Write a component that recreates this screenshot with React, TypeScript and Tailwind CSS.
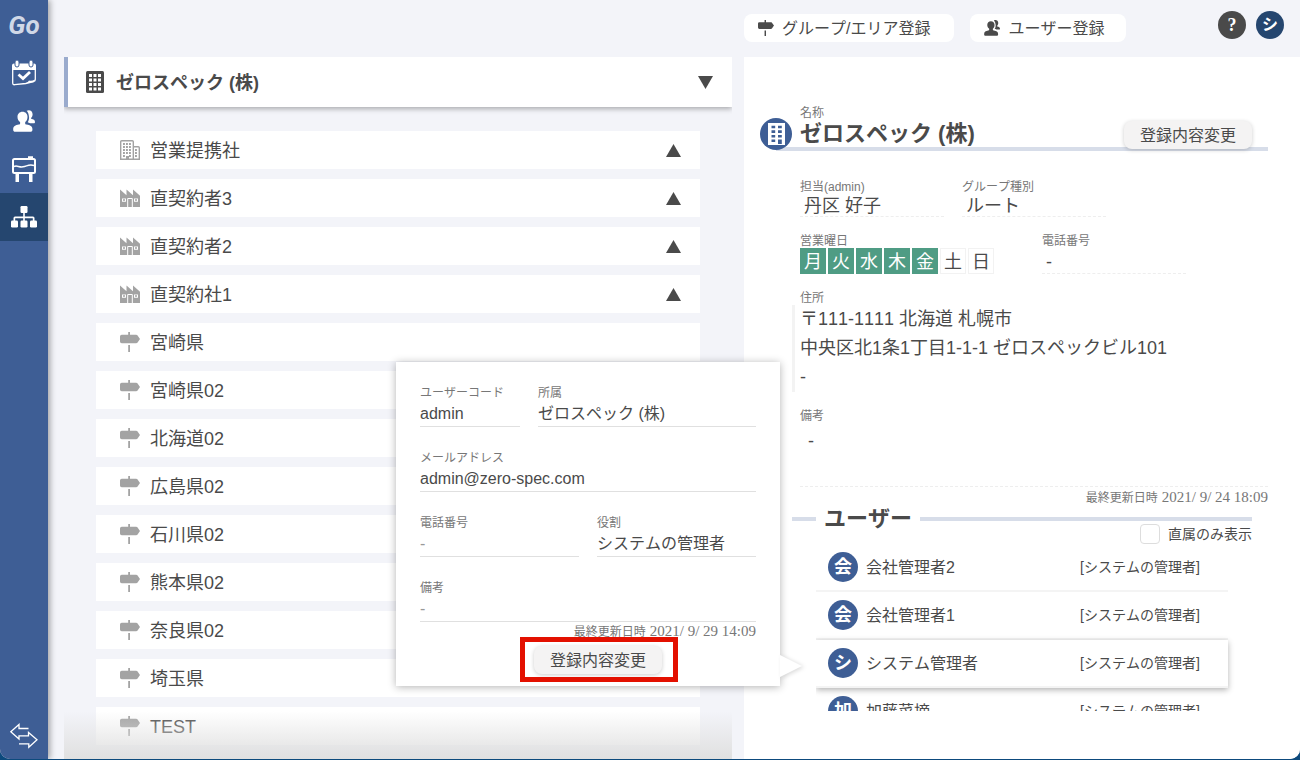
import React from 'react'

type IconProps = { className?: string }

const CalendarIcon = ({ className }: IconProps) => (
  <svg viewBox="0 0 26 28" className={className} fill="none" aria-hidden="true">
    <path d="M3 4.500h20a2 2 0 0 1 2 2V11H1V6.500a2 2 0 0 1 2-2z" fill="currentColor" />
    <path d="M1.700 10v14c0 1.300.8 1.900 2 1.700l11-1.200 8-2c1-.3 1.600-1 1.600-2V10" stroke="currentColor" strokeWidth="1.300" />
    <path d="M11 25c4-.5 5.500-1.200 7-3.500 2 .5 4 .2 6-1l-1 2.500z" fill="currentColor" />
    <rect x="4" y="1" width="4" height="7" rx="2" fill="currentColor" stroke="#3e5e95" strokeWidth="1" />
    <rect x="18" y="1" width="4" height="7" rx="2" fill="currentColor" stroke="#3e5e95" strokeWidth="1" />
    <path d="M7.500 15.500l4.500 4 7-6.500" stroke="currentColor" strokeWidth="2.800" />
  </svg>
)

const UsersIcon = ({ className }: IconProps) => (
  <svg viewBox="0 0 22 22" className={className} fill="currentColor" aria-hidden="true">
    <path d="M9.500 1.700c3 0 5 2.200 5 5.200 0 2.300-.9 4-2.300 5.200v1.300c0 .7.5 1 1.300 1.200 3.700.6 5.900 1.700 5.900 4.500v.8c0 1.200-.8 1.800-2 1.800H2.200c-1.200 0-2-.6-2-1.800v-.8c0-2.800 2.200-3.900 5.600-4.500.8-.2 1.300-.5 1.300-1.200v-1.300C5.600 11 4.500 9.200 4.500 6.900c0-3 2-5.200 5-5.200z" />
    <path d="M13.600.7c3-1.500 6 .3 6 3.500 0 1.700-.7 2.800-1.500 3.700v.9c2.500.5 3.900 1.400 3.900 3.100 0 .8-.4 1.300-1.200 1.300h-3.700c-.9-.5-1.600-.8-2.400-1 1-1.600 1.500-3.300 1.300-5.300-.2-2.200-.8-4.600-2.400-6.200z" />
  </svg>
)

const BoardIcon = ({ className }: IconProps) => (
  <svg viewBox="0 0 26 28" className={className} fill="none" aria-hidden="true">
    <rect x="2" y="4" width="22" height="14" rx="1.500" stroke="currentColor" strokeWidth="2" />
    <path d="M3 11.500c3-1.500 5 1 9 .3 4-.6 6-3 11-1.300" stroke="currentColor" strokeWidth="1.500" />
    <path d="M17 1.200h5V5h-5zM4.500 18H8v9H4.500zM18 18h3.500v9H18z" fill="currentColor" />
  </svg>
)

const SitemapIcon = ({ className }: IconProps) => (
  <svg viewBox="0 0 26 22" className={className} fill="currentColor" aria-hidden="true">
    <rect x="9.500" y="0" width="7" height="7" rx="1.200" />
    <path d="M12.200 6h1.600v4.500h8.200a1.500 1.500 0 0 1 1.500 1.500v3h-1.700v-2.800h-8V15h-1.600v-2.800h-8V15H2.500v-3A1.500 1.500 0 0 1 4 10.500h8.200z" />
    <rect x="0" y="14.500" width="7" height="7" rx="1.200" />
    <rect x="9.500" y="14.500" width="7" height="7" rx="1.200" />
    <rect x="19" y="14.500" width="7" height="7" rx="1.200" />
  </svg>
)

const SwapIcon = ({ className }: IconProps) => (
  <svg viewBox="0 0 30 28" className={className} fill="none" stroke="currentColor" strokeWidth="1.300" aria-hidden="true">
    <path d="M19.500 7.500H10V3.500L1.800 10.700 10 18v-3.200h9.500v-3.300L28 18.800l-8.200 7.400v-3.400H10" />
  </svg>
)

const HeadOfficeIcon = ({ className }: IconProps) => (
  <svg viewBox="0 0 18 22" className={className} aria-hidden="true">
    <rect x="0" y="0" width="18" height="22" rx="1.500" fill="currentColor" />
    {[3, 7.5, 12].map((x) =>
      [3, 7.5, 12, 16.5].map((y) => <rect key={`${x}-${y}`} x={x} y={y} width="3" height="3" fill="#fff" />),
    )}
  </svg>
)

const BuildingIcon = ({ className }: IconProps) => (
  <svg viewBox="0 0 17 22" className={className} aria-hidden="true">
    <path d="M0 0h17v22H0z" fill="#fff" />
    <path d="M3.500 2.700h3.700v2.600H3.500zM10 2.700h3.800v2.600H10zM3.500 7.300h3.700v2.600H3.500zM10 7.300h3.800v2.600H10zM3.500 11.900h3.700v2.600H3.500zM10 11.900h3.800v2.600H10zM3.500 16.500h3.700v2.600H3.500zM10 16.500h3.800V21H10z" fill="#3e5e95" />
  </svg>
)

const PartnerIcon = ({ className }: IconProps) => (
  <svg viewBox="0 0 20 20" className={className} aria-hidden="true">
    <path d="M.7 19.300V1.700a1 1 0 0 1 1-1h10.600a1 1 0 0 1 1 1v17.600zM13.300 6.700h5a1 1 0 0 1 1 1v11.600h-6z" fill="#fff" stroke="currentColor" strokeWidth="1.400" />
    <path d="M3 4h8.500M3 7h8.500M3 10h8.500M3 13h8.500M3 16h3M9 16h2.500M15 10h3M15 13h3M15 16h3" stroke="currentColor" strokeWidth="1.800" strokeDasharray="1.900 1.100" />
    <path d="M6 16h3v3.500H6z" fill="currentColor" />
  </svg>
)

const FactoryIcon = ({ className }: IconProps) => (
  <svg viewBox="0 0 20 20" className={className} aria-hidden="true">
    <path d="M0 1.500l6.500 5.800V1.500l6.500 5.800V1.500l7 6.300V19H0z" fill="currentColor" />
    <path d="M2 10.500h4v3.200H2zM14 10.500h4v3.200h-4z" fill="#fff" />
    <path d="M3 11.300h2v1.500H3zM15 11.300h2v1.500h-2z" fill="currentColor" />
    <path d="M7.700 19v-8.500h4.600V19" fill="none" stroke="#fff" strokeWidth="1" />
  </svg>
)

const SignIcon = ({ className }: IconProps) => (
  <svg viewBox="0 0 20 20" className={className} fill="currentColor" aria-hidden="true">
    <path d="M8.200 0H10v2.800h6.200c.5 0 .9.2 1.200.5L20 7l-2.600 3.700c-.3.3-.7.5-1.200.5H1.700A1.700 1.700 0 0 1 0 9.500v-5a1.700 1.700 0 0 1 1.700-1.700h6.500zM8.200 13H10v7H8.200z" />
  </svg>
)

const Triangle = ({ down }: { down?: boolean }) => (
  <svg viewBox="0 0 15 13" className="h-[13px] w-[15px] shrink-0" fill="#4a4a4a" aria-hidden="true">
    <path d={down ? 'M0 0h15L7.500 13z' : 'M7.500 0L15 13H0z'} />
  </svg>
)

const navItems = [
  { label: 'カレンダー', icon: <CalendarIcon className="h-7 w-[26px]" /> },
  { label: 'ユーザー', icon: <UsersIcon className="size-[22px]" /> },
  { label: '看板', icon: <BoardIcon className="h-7 w-[26px]" /> },
  { label: 'グループ', icon: <SitemapIcon className="h-[22px] w-[26px]" />, active: true },
]

const groups: { name: string; kind: 'partner' | 'factory' | 'area' }[] = [
  { name: '営業提携社', kind: 'partner' },
  { name: '直契約者3', kind: 'factory' },
  { name: '直契約者2', kind: 'factory' },
  { name: '直契約社1', kind: 'factory' },
  { name: '宮崎県', kind: 'area' },
  { name: '宮崎県02', kind: 'area' },
  { name: '北海道02', kind: 'area' },
  { name: '広島県02', kind: 'area' },
  { name: '石川県02', kind: 'area' },
  { name: '熊本県02', kind: 'area' },
  { name: '奈良県02', kind: 'area' },
  { name: '埼玉県', kind: 'area' },
  { name: 'TEST', kind: 'area' },
]

const groupIcons = { partner: PartnerIcon, factory: FactoryIcon, area: SignIcon }

const days = ['月', '火', '水', '木', '金', '土', '日']

const users = [
  { name: '会社管理者2', initial: '会' },
  { name: '会社管理者1', initial: '会' },
  { name: 'システム管理者', initial: 'シ', selected: true },
  { name: '加藤菜摘', initial: '加' },
]

const Label = ({ children }: { children: React.ReactNode }) => (
  <div className="h-4 text-xs leading-[18px] text-[#777]">{children}</div>
)

const Updated = ({ date }: { date: string }) => (
  <span className="whitespace-nowrap text-xs text-[#777]">
    最終更新日時
    <span className="ml-1 font-['Liberation_Serif',serif] text-[15px]">{date}</span>
  </span>
)

const EditButton = () => (
  <button
    type="button"
    className="flex h-7 items-center whitespace-nowrap rounded-lg bg-[#f4f3f3] px-4 pt-0.5 text-base leading-6 shadow-[0_1px_4px_rgba(0,0,0,0.2)]"
  >
    登録内容変更
  </button>
)

const Field = ({ label, value, className }: { label: string; value: string; className: string }) => (
  <div className={className}>
    <Label>{label}</Label>
    <div
      className={
        value === '-'
          ? 'h-[27px] border-b border-[#e0e0e0] text-base leading-7 text-[#999]'
          : 'h-[27px] border-b border-[#e0e0e0] text-base leading-7'
      }
    >
      {value}
    </div>
  </div>
)

const UserPopup = () => (
  <div className="absolute right-[520px] top-[305px] z-20 w-96 bg-white px-6 pb-3 pt-[22px] shadow-[0_1px_8px_rgba(0,0,0,0.3)]">
    <div className="flex flex-col gap-[22px]">
      <div className="flex gap-[18px]">
        <Field label="ユーザーコード" value="admin" className="w-[100px]" />
        <Field label="所属" value="ゼロスペック (株)" className="flex-1" />
      </div>
      <Field label="メールアドレス" value="admin@zero-spec.com" className="w-full" />
      <div className="flex gap-[18px]">
        <Field label="電話番号" value="-" className="flex-1" />
        <Field label="役割" value="システムの管理者" className="flex-1" />
      </div>
      <Field label="備考" value="-" className="w-full" />
    </div>
    <div className="h-[18px] text-right leading-[18px]">
      <Updated date="2021/ 9/ 29 14:09" />
    </div>
    <div className="mt-1.5 flex justify-center pl-5">
      <div className="relative">
        <EditButton />
        <div className="pointer-events-none absolute -bottom-2 -left-[14px] -right-4 -top-[9px] border-[5px] border-[#e31000]" />
      </div>
    </div>
    <svg
      viewBox="0 0 22 22"
      className="absolute bottom-[9px] left-full size-[22px] overflow-visible drop-shadow-[2px_1px_2px_rgba(0,0,0,0.15)]"
      aria-hidden="true"
    >
      <path d="M0 0l22 11L0 22z" fill="#fff" />
    </svg>
  </div>
)

const Sidebar = () => (
  <nav className="z-10 flex w-12 shrink-0 flex-col bg-[#3e5e95] pt-px text-white shadow-[2px_0_6px_rgba(0,0,0,0.35)]">
    <a
      href="#home"
      className="flex h-12 items-center justify-center font-[Roboto,sans-serif] text-[26px] font-bold italic text-[#d0d8e7]"
    >
      Go
    </a>
    {navItems.map((item) => (
      <a
        key={item.label}
        href="#menu"
        aria-label={item.label}
        className={
          item.active
            ? 'flex h-12 items-center justify-center bg-[#25466f]'
            : 'flex h-12 items-center justify-center'
        }
      >
        {item.icon}
      </a>
    ))}
    <button type="button" aria-label="切り替え" className="mt-auto flex h-12 items-center justify-center">
      <SwapIcon className="h-7 w-[30px]" />
    </button>
  </nav>
)

const Header = () => (
  <header className="flex h-[57px] shrink-0 justify-end">
    <div className="flex w-[556px] items-start gap-4 pr-4">
      <button
        type="button"
        className="mt-3.5 flex h-7 items-center gap-2 whitespace-nowrap rounded-lg bg-white pl-3.5 pr-6 text-base leading-6"
      >
        <SignIcon className="size-4" />
        <span className="pt-0.5">グループ/エリア登録</span>
      </button>
      <button
        type="button"
        className="mt-3.5 flex h-7 items-center gap-2 whitespace-nowrap rounded-lg bg-white pl-3.5 pr-[22px] text-base leading-6"
      >
        <UsersIcon className="size-4" />
        <span className="pt-0.5">ユーザー登録</span>
      </button>
      <div className="ml-auto mt-[11px] flex gap-2.5">
        <button
          type="button"
          className="size-7 rounded-full bg-[#4a4a4a] font-['Liberation_Serif',serif] text-lg font-bold leading-7 text-white"
        >
          ?
        </button>
        <button type="button" className="size-7 rounded-full bg-[#25466f] text-base font-bold leading-7 text-white">
          シ
        </button>
      </div>
    </div>
  </header>
)

const GroupList = () => (
  <section className="relative flex min-w-0 flex-1 flex-col overflow-hidden">
    <button
      type="button"
      className="flex h-[50px] shrink-0 items-center border-l-4 border-[#9aabcd] bg-white pl-[18px] pr-[19px] shadow-[0_2px_5px_rgba(0,0,0,0.3)]"
    >
      <HeadOfficeIcon className="h-[22px] w-[18px]" />
      <span className="ml-3 flex-1 pt-0.5 text-left text-lg font-bold leading-6">ゼロスペック (株)</span>
      <Triangle down />
    </button>
    <ul className="mt-6 flex flex-col gap-2.5 px-8">
      {groups.map((group) => {
        const Icon = groupIcons[group.kind]
        return (
          <li key={group.name} className="flex h-[38px] shrink-0 items-center gap-2.5 bg-white pl-6 pr-[19px]">
            <Icon className="size-5 text-[#a3a3a3]" />
            <span className="flex-1 pt-0.5 text-lg leading-6">{group.name}</span>
            {group.kind !== 'area' && <Triangle />}
          </li>
        )
      })}
    </ul>
    <div className="pointer-events-none absolute inset-x-0 bottom-0 h-12 bg-linear-to-b from-[#e0e0e0]/0 to-[#e0e0e0]" />
  </section>
)

const UserRow = ({ user }: { user: (typeof users)[number] }) => (
  <li
    className={
      user.selected
        ? 'relative flex h-12 shrink-0 items-center border-b-2 border-[#f4f4f4] bg-white pl-3 shadow-[0_2px_6px_rgba(0,0,0,0.3)]'
        : 'flex h-12 shrink-0 items-center border-b-2 border-[#f4f4f4] pl-3'
    }
  >
    <span className="size-[30px] rounded-full bg-[#3e5e95] text-center text-lg font-bold leading-[30px] text-white">
      {user.initial}
    </span>
    <span className="ml-2 flex-1 pt-0.5 text-base leading-6">{user.name}</span>
    <span className="w-[148px] text-sm leading-6">[システムの管理者]</span>
  </li>
)

const Detail = () => (
  <section className="relative flex w-[556px] shrink-0 flex-col bg-white pt-[47px]">
    <div className="relative mx-8 border-b-4 border-[#d7dde9] pl-6">
      <Label>名称</Label>
      <h1 className="text-[22px] font-bold leading-[27px]">ゼロスペック (株)</h1>
      <span className="absolute -bottom-[3px] -left-4 flex size-8 items-center justify-center rounded-full bg-[#3e5e95]">
        <BuildingIcon className="h-[22px] w-[17px]" />
      </span>
      <div className="absolute -bottom-0.5 right-4">
        <EditButton />
      </div>
    </div>

    <div className="mt-[27px] flex gap-[18px] pl-14">
      <div className="w-36">
        <Label>担当(admin)</Label>
        <div className="h-[23px] border-b border-dashed border-[#eee] pl-1 text-lg leading-6">丹区 好子</div>
      </div>
      <div className="w-36">
        <Label>グループ種別</Label>
        <div className="h-[23px] border-b border-dashed border-[#eee] pl-1 text-lg leading-6">ルート</div>
      </div>
    </div>

    <div className="mt-[15px] flex gap-[18px] pl-14">
      <div className="w-56">
        <Label>営業曜日</Label>
        <ul className="flex gap-0.5 text-lg">
          {days.map((day, i) => (
            <li
              key={day}
              className={
                i < 5
                  ? 'size-[26px] bg-[#4f9c84] text-center leading-7 text-white'
                  : 'size-[26px] border border-[#f2f2f2] text-center leading-[26px]'
              }
            >
              {day}
            </li>
          ))}
        </ul>
      </div>
      <div className="w-36">
        <Label>電話番号</Label>
        <div className="h-[26px] border-b border-dashed border-[#eee] pl-1 text-lg leading-7">-</div>
      </div>
    </div>

    <div className="mt-[15px] pl-14">
      <Label>住所</Label>
      <div className="-ml-2 border-l-[3px] border-[#f3f3f3] pl-[5px] text-lg leading-[29px]">
        <p>〒111-1111 北海道 札幌市</p>
        <p>中央区北1条1丁目1-1-1 ゼロスペックビル101</p>
        <p>-</p>
      </div>
    </div>

    <div className="mt-[15px] pl-14 pr-8">
      <Label>備考</Label>
      <div className="h-16 border-b border-dashed border-[#eee] pl-2 pt-1 text-lg leading-7">-</div>
      <div className="h-5 text-right leading-5">
        <Updated date="2021/ 9/ 24 18:09" />
      </div>
    </div>

    <div className="mx-12 flex items-center">
      <span className="h-1 w-6 bg-[#d7dde9]" />
      <h2 className="px-2 text-[22px] font-bold leading-6">ユーザー</h2>
      <span className="h-1 flex-1 bg-[#d7dde9]" />
    </div>
    <label className="mr-12 -mt-[7px] flex items-center gap-2 self-end text-sm leading-5">
      <input type="checkbox" className="size-5 appearance-none rounded border border-[#ddd] bg-white" />
      直属のみ表示
    </label>
    <ul className="mb-12 ml-[72px] mr-12 flex min-h-0 flex-1 flex-col overflow-hidden pr-6">
      {users.map((user) => (
        <UserRow key={user.name} user={user} />
      ))}
    </ul>

    <UserPopup />
  </section>
)

export default function App() {
  return (
    <div className="h-screen bg-[#0d4a7d] pb-px font-['Liberation_Sans','Noto_Sans_CJK_JP',sans-serif] text-[#4a4a4a] [font-kerning:none]">
      <div className="flex h-full overflow-hidden rounded-b-[10px] bg-[#f3f4f9]">
        <Sidebar />
        <div className="flex min-w-0 flex-1 flex-col">
          <Header />
          <main className="flex min-h-0 flex-1 gap-3 pl-4">
            <GroupList />
            <Detail />
          </main>
        </div>
      </div>
    </div>
  )
}
